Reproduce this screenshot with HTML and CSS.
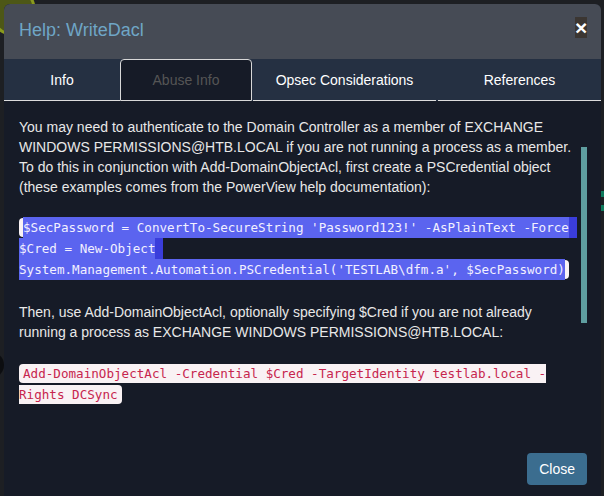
FILE: index.html
```html
<!DOCTYPE html>
<html lang="en">
<head>
<meta charset="utf-8">
<title>Help: WriteDacl</title>
<link rel="stylesheet" href="styles.css">
</head>
<body>
<div class="stage">
  <div class="node node-olive"></div>
  <div class="node node-dark"></div>
  <div class="edge-mark mark-1"></div>
  <div class="edge-mark mark-2"></div>
  <div class="modal">
    <div class="modal-header">
      <h4 class="title">Help: WriteDacl</h4>
      <button class="close-x" type="button">×</button>
    </div>
    <ul class="tabs">
      <li class="tab">Info</li>
      <li class="tab active">Abuse Info</li>
      <li class="tab opsec">Opsec Considerations</li>
      <li class="tab refs">References</li>
    </ul>
    <div class="modal-body">
      <div class="content">
        <p>You may need to authenticate to the Domain Controller as a member of EXCHANGE WINDOWS PERMISSIONS@HTB.LOCAL if you are not running a process as a member. To do this in conjunction with Add-DomainObjectAcl, first create a PSCredential object (these examples comes from the PowerView help documentation):</p>
        <p class="code-para first-code"><code class="code sel"><span class="hl">$SecPassword = ConvertTo-SecureString 'Password123!' -AsPlainText -Force</span><span class="eol">&nbsp;</span><br><span class="hl">$Cred = New-Object</span><span class="eol">&nbsp;</span><br><span class="hl">System.Management.Automation.PSCredential('TESTLAB\dfm.a', $SecPassword)</span></code></p>
        <p class="after-code">Then, use Add-DomainObjectAcl, optionally specifying $Cred if you are not already running a process as EXCHANGE WINDOWS PERMISSIONS@HTB.LOCAL:</p>
        <p class="code-para last"><code class="code">Add-DomainObjectAcl -Credential $Cred -TargetIdentity testlab.local -Rights DCSync</code></p>
      </div>
      <div class="track"><div class="thumb"></div></div>
    </div>
    <div class="modal-footer">
      <button class="btn" type="button">Close</button>
    </div>
  </div>
</div>
</body>
</html>
```

FILE: styles.css
```css
html, body {
  margin: 0;
  padding: 0;
  height: 100%;
}

body {
  background: #1d1f23;
  font-family: "Liberation Sans", Arial, sans-serif;
  overflow: hidden;
}

.stage {
  position: relative;
  height: 496px;
  box-sizing: border-box;
  padding: 4px 3px 0 4px;
  overflow: hidden;
}

.node {
  position: absolute;
  border-radius: 50%;
}

.node-olive {
  left: -10px;
  top: -14px;
  width: 40px;
  height: 44px;
  background: #4d5716;
  border: 3px solid #8a9a1d;
}

.node-dark {
  left: -22px;
  top: 352px;
  width: 26px;
  height: 26px;
  background: #0c0d10;
}

.edge-mark {
  position: absolute;
  left: 601px;
  width: 3px;
  height: 6px;
  background: #0f7a5c;
}

.mark-1 { top: 191px; }
.mark-2 { top: 205px; }

.modal {
  position: relative;
  z-index: 1;
  width: 597px;
  height: 540px;
  background: #161b27;
  border-radius: 6px 6px 0 0;
  overflow: hidden;
  display: flex;
  flex-direction: column;
}

.modal-header {
  height: 55px;
  box-sizing: border-box;
  background: #464b55;
  display: flex;
  justify-content: space-between;
  align-items: flex-start;
  padding: 17px 14px 0 15px;
}

.title {
  margin: 0;
  font-size: 18px;
  font-weight: normal;
  line-height: 19.8px;
  color: #6fa6c6;
}

.close-x {
  margin-top: -4px;
  width: 12px;
  height: 21px;
  padding: 0;
  border: 0;
  background: #3b3632;
  color: #ffffff;
  font: bold 21px/21px "Liberation Sans", Arial, sans-serif;
  text-align: center;
  overflow: hidden;
}

.tabs {
  display: grid;
  grid-template-columns: 116px 132px 184px 1fr;
  height: 42px;
  margin: 0;
  padding: 0;
  list-style: none;
  background: #253042;
}

.tab {
  display: flex;
  align-items: center;
  justify-content: center;
  color: #ffffff;
  font-size: 14px;
  border-bottom: 1px solid #dddddd;
}

.tab.active {
  border: 1px solid #d8d8d8;
  border-radius: 4px 4px 0 0;
  background: #161b27;
  color: #555555;
}

.tab.opsec { margin-left: 1px; }
.tab.refs { margin-left: 2px; }

.modal-body {
  display: flex;
  padding: 16px 14px 0 15px;
}

.content {
  width: 559px;
  color: #e8e8e8;
  font-size: 14px;
  line-height: 20px;
}

.content p {
  margin: 0 0 20px;
}

.content p.first-code {
  margin-bottom: 22px;
}

.content p.after-code {
  margin-bottom: 21px;
}

.content p.last {
  margin-bottom: 0;
}

.code {
  font-family: "DejaVu Sans Mono", monospace;
  font-size: 12.6px;
  padding: 2px 4px;
  color: #c7254e;
  background: #f9f2f4;
  border-radius: 4px;
}

.code.sel .hl {
  background: #5b64ef;
  color: #f2f0ff;
  padding: 3px 0;
}

.code.sel .eol {
  background: #3a3ddb;
  padding: 3px 0;
}

.track {
  margin-left: 3px;
  width: 6px;
  flex: none;
}

.thumb {
  margin-top: 30px;
  height: 176px;
  background: #5f9ea0;
}

.modal-footer {
  display: flex;
  justify-content: flex-end;
  padding: 48px 14px 0 0;
}

.btn {
  background: #3b6d8f;
  color: #ffffff;
  border: 0;
  border-radius: 4px;
  padding: 6px 12px;
  font: 14px/20px "Liberation Sans", Arial, sans-serif;
}
```
